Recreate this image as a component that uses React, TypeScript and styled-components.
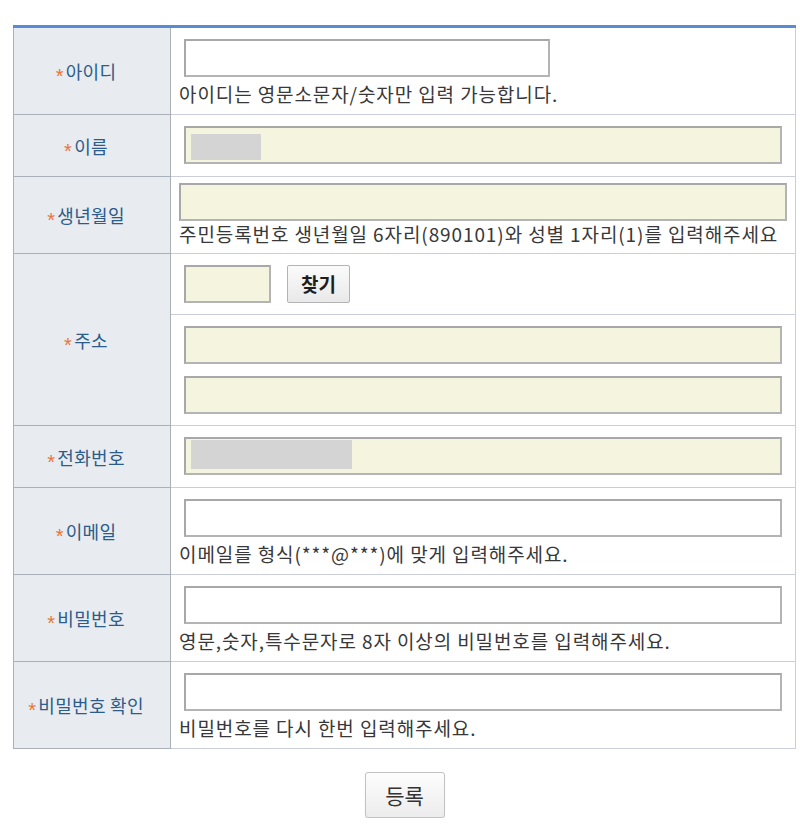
import React from "react";
import styled, { createGlobalStyle } from "styled-components";

const GlobalStyle = createGlobalStyle`
  body {
    margin: 0;
    background: #ffffff;
    font-family: "Noto Sans CJK KR", "Noto Sans", sans-serif;
  }
`;

const Page = styled.div`
  padding: 25px 0 0 13px;
  width: 783px;
`;

const FormTable = styled.div`
  border-top: 3px solid #5b8ad4;
  display: flex;
  flex-direction: column;
`;

const Row = styled.div<{ $height: number }>`
  display: flex;
  height: ${props => props.$height}px;
`;

const Label = styled.div`
  box-sizing: border-box;
  width: 158px;
  flex-shrink: 0;
  display: flex;
  align-items: center;
  justify-content: center;
  padding-right: 12px;
  background-color: #e8ebef;
  border-left: 1px solid #aab0b8;
  border-right: 1px solid #aab0b8;
  border-bottom: 1px solid #aab0b8;
  color: #2b5c8a;
  font-size: 18px;
  letter-spacing: 0.3px;
`;

const Star = styled.span`
  color: #e5773c;
  font-family: "Liberation Sans", sans-serif;
  font-size: 20px;
  line-height: 1;
  margin-right: 2px;
  position: relative;
  top: 5px;
`;

const Cell = styled.div<{ $top?: number }>`
  box-sizing: border-box;
  flex: 1;
  display: flex;
  flex-direction: column;
  align-items: flex-start;
  padding: ${props => (props.$top ?? 11)}px 0 0 8px;
  border-right: 1px solid #c9ced8;
  border-bottom: 1px solid #c9ced8;
`;

const SplitCell = styled.div`
  box-sizing: border-box;
  flex: 1;
  display: flex;
  flex-direction: column;
  border-right: 1px solid #c9ced8;
  border-bottom: 1px solid #c9ced8;
`;

const SubCell = styled.div<{ $height: number; $line?: boolean }>`
  box-sizing: border-box;
  height: ${props => props.$height}px;
  display: flex;
  flex-direction: column;
  align-items: flex-start;
  gap: 12px;
  padding: 11px 0 0 13px;
  border-bottom: ${props => (props.$line ? "1px solid #c9ced8" : "none")};
`;

const InlineGroup = styled.div`
  display: flex;
  align-items: center;
  gap: 16px;
`;

const Field = styled.div<{ $width: number; $fill?: boolean; $inset?: number }>`
  box-sizing: border-box;
  position: relative;
  width: ${props => props.$width}px;
  height: 38px;
  flex-shrink: 0;
  margin-left: ${props => props.$inset ?? 5}px;
  background-color: ${props => (props.$fill ? "#f4f4df" : "#ffffff")};
  border: 2px solid #a8a8a8;
  border-right-color: #b4b4b4;
  border-bottom-color: #b4b4b4;
`;

const Masked = styled.div<{ $width: number; $height: number; $top: number }>`
  position: absolute;
  left: 5px;
  top: ${props => props.$top}px;
  width: ${props => props.$width}px;
  height: ${props => props.$height}px;
  background-color: #d4d4d4;
`;

const Help = styled.p<{ $gap?: number }>`
  margin: ${props => props.$gap ?? 4}px 0 0 0;
  font-size: 19px;
  line-height: 26px;
  color: #383838;
  letter-spacing: 0.9px;
  white-space: nowrap;
`;

const SearchButton = styled.button`
  box-sizing: border-box;
  width: 63px;
  height: 38px;
  margin-top: -1px;
  padding: 0;
  border: 1px solid #b3b3b3;
  border-radius: 2px;
  background: linear-gradient(#fbfbfb, #e9e9e9);
  color: #1e1e1e;
  font-family: "Noto Sans CJK KR", sans-serif;
  font-size: 19px;
  font-weight: 700;
`;

const Footer = styled.div`
  display: flex;
  justify-content: center;
  padding-top: 23px;
`;

const SubmitButton = styled.button`
  box-sizing: border-box;
  width: 80px;
  height: 46px;
  padding: 0;
  border: 1px solid #c2c2c2;
  border-radius: 3px;
  background: linear-gradient(#fdfdfd, #ececec);
  box-shadow: 0 1px 1px rgba(0, 0, 0, 0.12);
  color: #333333;
  font-family: "Noto Sans CJK KR", sans-serif;
  font-size: 21px;
`;

const FieldLabel = ({ children }: { children: React.ReactNode }) => (
  <Label>
    <Star>*</Star>
    {children}
  </Label>
);

const App = () => {
  return (
    <Page>
      <GlobalStyle />
      <FormTable>
        <Row $height={87}>
          <FieldLabel>아이디</FieldLabel>
          <Cell>
            <Field $width={366} />
            <Help>아이디는 영문소문자/숫자만 입력 가능합니다.</Help>
          </Cell>
        </Row>
        <Row $height={62}>
          <FieldLabel>이름</FieldLabel>
          <Cell>
            <Field $width={598} $fill>
              <Masked $width={70} $height={26} $top={6} />
            </Field>
          </Cell>
        </Row>
        <Row $height={77}>
          <FieldLabel>생년월일</FieldLabel>
          <Cell $top={6}>
            <Field $width={608} $fill $inset={0} />
            <Help $gap={0}>
              주민등록번호 생년월일 6자리(890101)와 성별 1자리(1)를 입력해주세요
            </Help>
          </Cell>
        </Row>
        <Row $height={172}>
          <FieldLabel>주소</FieldLabel>
          <SplitCell>
            <SubCell $height={61} $line>
              <InlineGroup>
                <Field $width={87} $fill $inset={0} />
                <SearchButton type="button">찾기</SearchButton>
              </InlineGroup>
            </SubCell>
            <SubCell $height={110}>
              <Field $width={598} $fill $inset={0} />
              <Field $width={598} $fill $inset={0} />
            </SubCell>
          </SplitCell>
        </Row>
        <Row $height={62}>
          <FieldLabel>전화번호</FieldLabel>
          <Cell>
            <Field $width={598} $fill>
              <Masked $width={161} $height={29} $top={1} />
            </Field>
          </Cell>
        </Row>
        <Row $height={87}>
          <FieldLabel>이메일</FieldLabel>
          <Cell>
            <Field $width={598} />
            <Help>이메일를 형식(***@***)에 맞게 입력해주세요.</Help>
          </Cell>
        </Row>
        <Row $height={87}>
          <FieldLabel>비밀번호</FieldLabel>
          <Cell>
            <Field $width={598} />
            <Help>영문,숫자,특수문자로 8자 이상의 비밀번호를 입력해주세요.</Help>
          </Cell>
        </Row>
        <Row $height={87}>
          <FieldLabel>비밀번호 확인</FieldLabel>
          <Cell>
            <Field $width={598} />
            <Help>비밀번호를 다시 한번 입력해주세요.</Help>
          </Cell>
        </Row>
      </FormTable>
      <Footer>
        <SubmitButton type="button">등록</SubmitButton>
      </Footer>
    </Page>
  );
};

export default App;
